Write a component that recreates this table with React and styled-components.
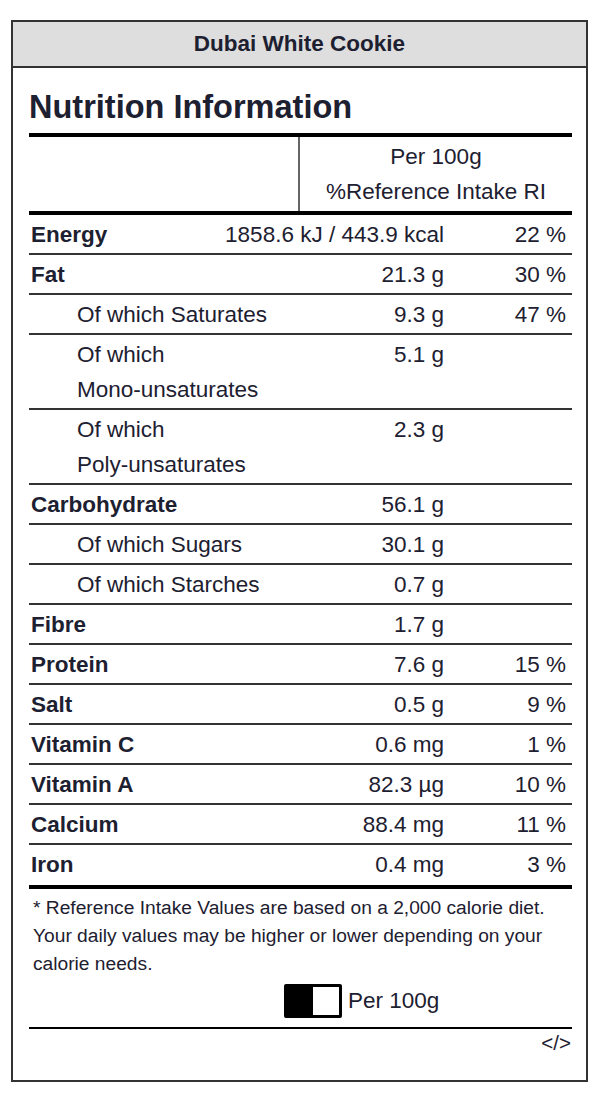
import React from 'react'
import styled, { createGlobalStyle } from 'styled-components'

const rows = [
    { label: 'Energy', value: '1858.6 kJ / 443.9 kcal', ri: '22 %', bold: true },
    { label: 'Fat', value: '21.3 g', ri: '30 %', bold: true },
    { label: 'Of which Saturates', value: '9.3 g', ri: '47 %' },
    { label: 'Of which', rest: 'Mono-unsaturates', value: '5.1 g' },
    { label: 'Of which', rest: 'Poly-unsaturates', value: '2.3 g' },
    { label: 'Carbohydrate', value: '56.1 g', bold: true },
    { label: 'Of which Sugars', value: '30.1 g' },
    { label: 'Of which Starches', value: '0.7 g' },
    { label: 'Fibre', value: '1.7 g', bold: true },
    { label: 'Protein', value: '7.6 g', ri: '15 %', bold: true },
    { label: 'Salt', value: '0.5 g', ri: '9 %', bold: true },
    { label: 'Vitamin C', value: '0.6 mg', ri: '1 %', bold: true },
    { label: 'Vitamin A', value: '82.3 µg', ri: '10 %', bold: true },
    { label: 'Calcium', value: '88.4 mg', ri: '11 %', bold: true },
    { label: 'Iron', value: '0.4 mg', ri: '3 %', bold: true },
]

const App = () => {
    return (
        <>
            <GlobalStyle />
            <Page>
                <Label>
                    <ProductName>Dubai White Cookie</ProductName>
                    <Body>
                        <Title>Nutrition Information</Title>
                        <Table>
                            <HeadRow>
                                <HeadBlank />
                                <HeadCell>
                                    <div>Per 100g</div>
                                    <div>%Reference Intake RI</div>
                                </HeadCell>
                            </HeadRow>
                            {rows.map((r, i) => (
                                <Row key={r.label + (r.rest || '')} $last={i === rows.length - 1}>
                                    <Name $bold={r.bold}>
                                        {r.label}
                                        {r.rest && <> <NoWrap>{r.rest}</NoWrap></>}
                                    </Name>
                                    <Value>{r.value}</Value>
                                    <Ri>{r.ri}</Ri>
                                </Row>
                            ))}
                        </Table>
                        <Note>
                            * Reference Intake Values are based on a 2,000 calorie diet. Your daily values may be
                            higher or lower depending on your calorie needs.
                        </Note>
                        <ToggleRow>
                            <Toggle />
                            <span>Per 100g</span>
                        </ToggleRow>
                        <Embed>&lt;/&gt;</Embed>
                    </Body>
                </Label>
            </Page>
        </>
    )
}

export default App

const GlobalStyle = createGlobalStyle`
    body {
        margin: 0;
        background: #fff;
        font-family: "Liberation Sans", Arial, sans-serif;
        color: #1d2030;
    }
`

const Page = styled.div`
    padding: 20px 12px 12px 11px;
`

const Label = styled.div`
    width: 577px;
    box-sizing: border-box;
    border: 2px solid #333;
`

const ProductName = styled.div`
    background-color: #dedede;
    border-bottom: 2px solid #333;
    text-align: center;
    font-size: 22.5px;
    font-weight: 700;
    line-height: 28px;
    padding: 8px 0;
`

const Body = styled.div`
    padding: 0 14px 23px 16px;
`

const Title = styled.h1`
    margin: 21px 0 8px;
    font-size: 32.5px;
    line-height: 36px;
    font-weight: 700;
`

const Table = styled.div`
    border-top: 4px solid #000;
    border-bottom: 4px solid #000;
    font-size: 22.5px;
    line-height: 35px;
`

const HeadRow = styled.div`
    display: grid;
    grid-template-columns: 271px 1fr;
    border-bottom: 4px solid #000;
`

const HeadBlank = styled.div`
    border-right: 2px solid #666;
`

const HeadCell = styled.div`
    text-align: center;
    padding: 2px 0;
`

const Row = styled.div`
    display: grid;
    grid-template-columns: 271px 144px 1fr;
    padding: 2px 0 ${p => (p.$last ? '3px' : '1px')};
    border-bottom: ${p => (p.$last ? 'none' : '2px solid #333')};
`

const Name = styled.div`
    font-weight: ${p => (p.$bold ? 700 : 400)};
    padding-left: ${p => (p.$bold ? '2px' : '48px')};
`

const NoWrap = styled.span`
    white-space: nowrap;
`

const Value = styled.div`
    display: flex;
    justify-content: flex-end;
    white-space: nowrap;
`

const Ri = styled.div`
    text-align: right;
    padding-right: 6px;
`

const Note = styled.p`
    margin: 0;
    padding: 5px 0 0 4px;
    font-size: 19.2px;
    line-height: 28px;
`

const ToggleRow = styled.div`
    display: flex;
    align-items: center;
    gap: 6px;
    margin-top: 6px;
    padding: 0 0 9px 255px;
    border-bottom: 2px solid #000;
    font-size: 22.5px;
`

const Toggle = styled.span`
    position: relative;
    width: 58px;
    height: 34px;
    box-sizing: border-box;
    border: 3px solid #000;
    border-radius: 2px;
    background: #fff;

    &::before {
        content: '';
        position: absolute;
        left: 0;
        top: 0;
        bottom: 0;
        width: 26px;
        background: #000;
    }
`

const Embed = styled.div`
    text-align: right;
    font-size: 20.5px;
    line-height: 28px;
    padding-right: 1px;
`
